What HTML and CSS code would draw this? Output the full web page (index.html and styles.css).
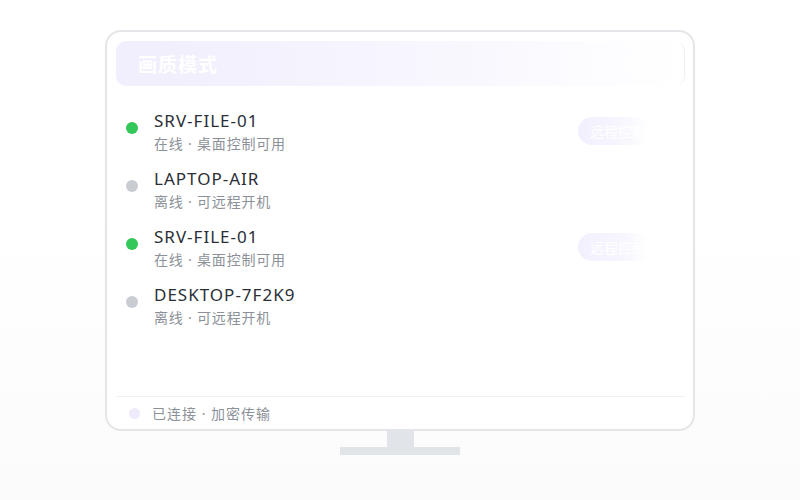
FILE: index.html
```html
<!DOCTYPE html>
<html lang="zh">
<head>
<meta charset="utf-8">
<title>画质模式</title>
<link rel="stylesheet" href="styles.css">
</head>
<body>
<div class="stage">
  <div class="screen">
    <div class="header">
      <span class="title">画质模式</span>
      <span class="hint">高清 ›</span>
    </div>
    <div class="list">
      <div class="row">
        <span class="dot on"></span>
        <div class="info">
          <div class="name">SRV-FILE-01</div>
          <div class="sub">在线 · 桌面控制可用</div>
        </div>
        <span class="btn">远程控制</span>
      </div>
      <div class="row">
        <span class="dot off"></span>
        <div class="info">
          <div class="name">LAPTOP-AIR</div>
          <div class="sub">离线 · 可远程开机</div>
        </div>
      </div>
      <div class="row">
        <span class="dot on"></span>
        <div class="info">
          <div class="name">SRV-FILE-01</div>
          <div class="sub">在线 · 桌面控制可用</div>
        </div>
        <span class="btn">远程控制</span>
      </div>
      <div class="row">
        <span class="dot off"></span>
        <div class="info">
          <div class="name">DESKTOP-7F2K9</div>
          <div class="sub">离线 · 可远程开机</div>
        </div>
      </div>
    </div>
    <div class="footer">
      <span class="fdot"></span>
      <span class="ftext">已连接 · 加密传输</span>
    </div>
  </div>
  <div class="neck"></div>
  <div class="base"></div>
</div>
</body>
</html>
```
FILE: styles.css
```css
* { box-sizing: border-box; }
html, body { margin: 0; padding: 0; }
body {
  width: 800px;
  height: 500px;
  background: linear-gradient(180deg, #ffffff 0%, #ffffff 45%, #fbfbfc 100%);
  font-family: "Noto Sans", "Noto Sans CJK SC", sans-serif;
  overflow: hidden;
}
.stage {
  display: flex;
  flex-direction: column;
  align-items: center;
  padding-top: 30px;
}
.screen {
  width: 590px;
  height: 401px;
  border: 2px solid #e3e5e8;
  border-radius: 16px;
  background: #ffffff;
  padding: 9px 8px 0 9px;
  display: flex;
  flex-direction: column;
}
.header {
  height: 45px;
  border-radius: 10px;
  background: linear-gradient(90deg, #f1eefd 0%, #f7f5fe 50%, rgba(255,255,255,0.6) 100%);
  border-right: 1px solid #eef0f3;
  display: flex;
  align-items: center;
  justify-content: space-between;
  padding: 0 22px 0 22px;
}
.title {
  color: #ffffff;
  font-size: 19px;
  letter-spacing: 1px;
  font-weight: 700;
  font-family: "Noto Sans CJK SC", sans-serif;
}
.hint {
  color: rgba(255,255,255,0.9);
  font-size: 14px;
}
.list {
  flex: 1;
  padding: 24px 0 0 10px;
}
.row {
  display: flex;
  align-items: flex-start;
  height: 58px;
}
.dot {
  width: 12px;
  height: 12px;
  border-radius: 50%;
  margin-top: 12px;
  margin-right: 16px;
  flex: none;
}
.dot.on { background: #34c759; }
.dot.off { background: #c9ccd2; }
.info { flex: 1; }
.name {
  font-size: 17px;
  line-height: 22px;
  letter-spacing: 1px;
  color: #2a2e35;
}
.sub {
  font-size: 14px;
  line-height: 20px;
  letter-spacing: 0.8px;
  margin-top: 2px;
  color: #8c9199;
}
.btn {
  margin-top: 7px;
  margin-right: 35px;
  width: 72px;
  height: 28px;
  border-radius: 14px;
  background: linear-gradient(90deg, #f3f0fe 0%, #f7f5fe 60%, rgba(255,255,255,0.9) 100%);
  color: #ffffff;
  font-size: 14px;
  line-height: 28px;
  padding-left: 12px;
  font-family: "Noto Sans CJK SC", sans-serif;
  white-space: nowrap;
  overflow: hidden;
}
.footer {
  height: 33px;
  border-top: 1px solid #eef0f3;
  display: flex;
  align-items: center;
  padding-left: 13px;
}
.fdot {
  width: 11px;
  height: 11px;
  border-radius: 50%;
  background: #efebfd;
  margin-right: 12px;
}
.ftext {
  font-size: 14px;
  letter-spacing: 1px;
  color: #8c9199;
}
.neck {
  width: 27px;
  height: 16px;
  background: #e1e4e8;
}
.base {
  width: 120px;
  height: 8px;
  background: #e1e4e8;
}
```
